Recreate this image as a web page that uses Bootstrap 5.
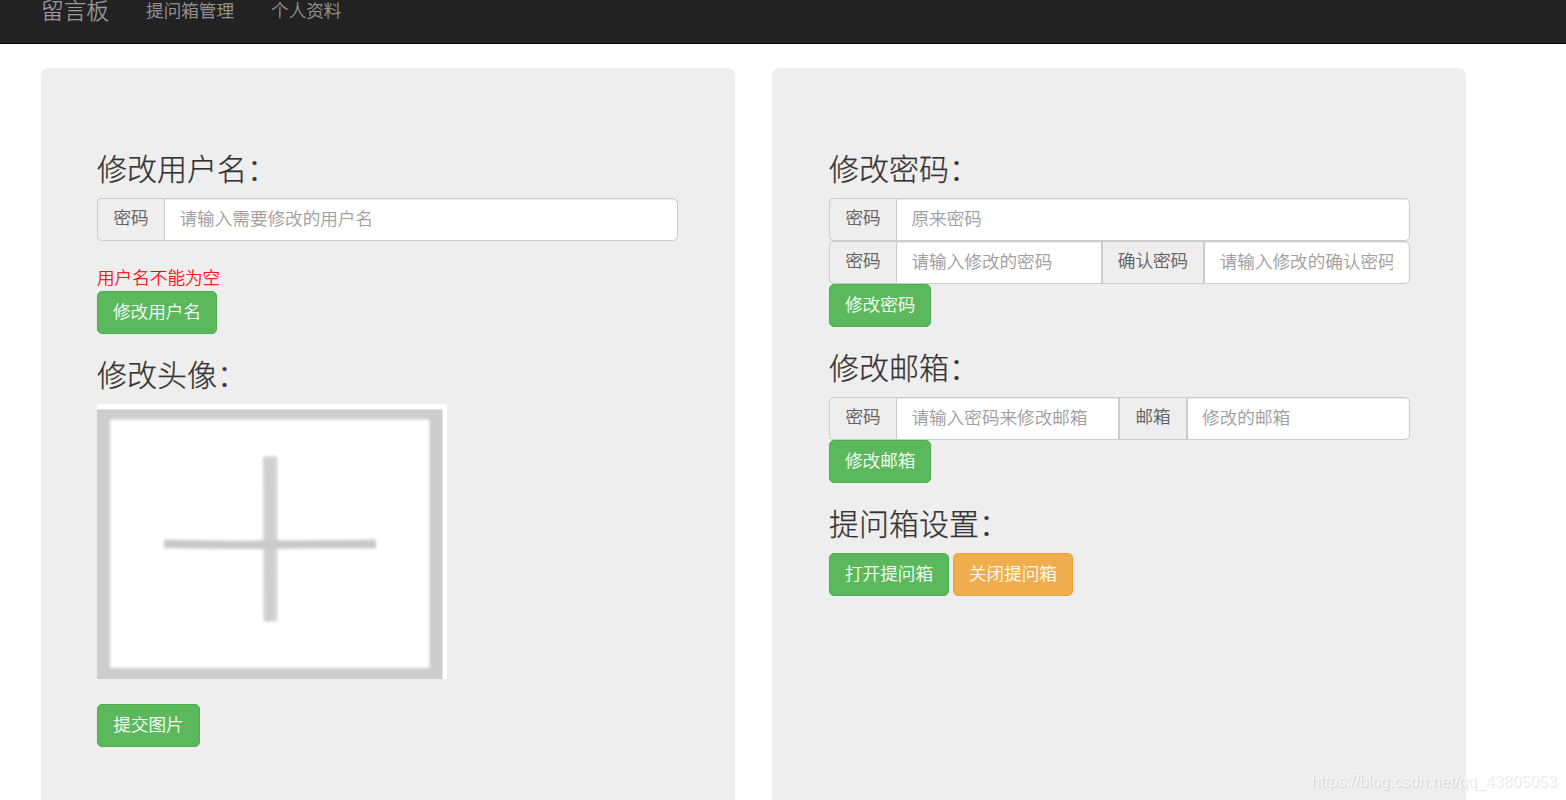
<!DOCTYPE html>
<html lang="zh-CN">
<head>
<meta charset="utf-8">
<meta name="viewport" content="width=device-width, initial-scale=1">
<title>留言板</title>
<link rel="stylesheet" href="https://cdn.jsdelivr.net/npm/bootstrap@5.3.0/dist/css/bootstrap.min.css">
<style>
body{font-family:"Noto Sans CJK SC",sans-serif;font-size:17.6px;font-weight:300;line-height:25px;color:#333;height:800px;overflow:hidden;background:#fff;-webkit-text-stroke:.25px}
.topbar{height:44px;background:#222;border-bottom:1px solid #080808;padding:0 41px;align-items:flex-start;justify-content:flex-start;flex-wrap:nowrap}
.topbar .navbar-brand{font-size:22.7px;line-height:25px;color:#9d9d9d;padding:0;margin:-3px 37px 0 0}
.topbar .nav-link{color:#9d9d9d;padding:0;margin:-3px 37px 0 0;line-height:25px}
.panels{margin:24px 0 0 41px;gap:37px}
.panel-box{width:694px;height:732px;flex:none;background:#eee;border-radius:7.5px 7.5px 0 0;padding:83px 57px 0 56px}
.panel-box+.panel-box{padding:83px 56px 0 57px}
.panel-box h3{font-size:30px;font-weight:300;line-height:33px;margin:0 0 14px;color:#333}
.field-row{height:43px;flex-wrap:nowrap}
.field-row .input-group-text{font-size:17.6px;font-weight:300;line-height:25px;color:#555;background:#eee;border:1px solid #ccc;border-radius:5px;padding:0 15px 6px;margin:0!important}
.field-row .input-group-text:first-child{border-right:0;width:67px;padding-left:15.5px;padding-right:0}
.field-row .form-control{font-size:17.6px;font-weight:300;line-height:25px;height:43px;color:#555;border:1px solid #ccc;border-radius:5px;padding:0 16px 4px 14.5px;margin:0!important;box-shadow:inset 0 1px 1px rgba(0,0,0,.075)}
.field-row .form-control::placeholder{color:#999;opacity:1}
.act{height:43px;font-size:17.6px;font-weight:300;line-height:25px;padding:0 15px 4px;border-radius:5px;color:#fff;display:block}
.act-go{background:#5cb85c;border-color:#4cae4c}
.act-warn{background:#f0ad4e;border-color:#eea236}
.act-upload{width:103px;margin-top:25px}
.error-text{color:#f00;margin-top:23px;height:27px}
.panel-box h3.next-title{margin-top:23px;margin-bottom:15px}
.panel-box h3.tight{margin-bottom:14px}
.avatar{display:block;margin-top:-1px}
.watermark{position:fixed;right:9px;bottom:6px;font:400 16px/24px "Liberation Sans",sans-serif;color:rgba(255,255,255,.6);text-shadow:1px 1px 1px rgba(0,0,0,.12);white-space:nowrap;-webkit-text-stroke:0}
</style>
</head>
<body>
<nav class="navbar topbar">
  <a class="navbar-brand" href="#">留言板</a>
  <a class="nav-link" href="#">提问箱管理</a>
  <a class="nav-link" href="#">个人资料</a>
</nav>
<main class="panels d-flex">
  <section class="panel-box">
    <h3>修改用户名：</h3>
    <div class="input-group field-row">
      <span class="input-group-text">密码</span>
      <input class="form-control" type="text" placeholder="请输入需要修改的用户名">
    </div>
    <div class="error-text">用户名不能为空</div>
    <button class="btn act act-go" type="button">修改用户名</button>
    <h3 class="next-title">修改头像：</h3>
    <svg class="avatar" width="350" height="275" viewBox="0 0 350 275">
      <defs>
        <filter id="soft" x="-10%" y="-10%" width="120%" height="120%" color-interpolation-filters="sRGB"><feGaussianBlur stdDeviation="1.5"/></filter>
        <filter id="softbar" filterUnits="userSpaceOnUse" x="50" y="40" width="250" height="190" color-interpolation-filters="sRGB"><feGaussianBlur stdDeviation="1.7"/></filter>
        <linearGradient id="vbar"><stop offset="0" stop-color="#d3d3d3"/><stop offset=".5" stop-color="#cdcdcd"/><stop offset="1" stop-color="#d8d8d8"/></linearGradient>
      </defs>
      <rect width="350" height="275" fill="#fff"/>
      <rect y="5" width="346" height="270" fill="#e4e4e4"/>
      <rect y="6" width="345" height="269" fill="#cdcdcd"/>
      <rect x="13" y="15.500" width="319.500" height="248.500" fill="#fff" filter="url(#soft)"/>
      <g filter="url(#softbar)">
        <path d="M166 52.500H180.500V217.500H166.500Z" fill="url(#vbar)"/>
        <path d="M67 135.500Q110 137 166 136.500Q225 136.500 279 135.500V144.500Q225 144 166 145Q110 145 67 144Z" fill="#c9c9c9"/>
      </g>
    </svg>
    <button class="btn act act-go act-upload" type="button">提交图片</button>
  </section>
  <section class="panel-box">
    <h3>修改密码：</h3>
    <div class="input-group field-row">
      <span class="input-group-text">密码</span>
      <input class="form-control" type="text" placeholder="原来密码">
    </div>
    <div class="input-group field-row">
      <span class="input-group-text">密码</span>
      <input class="form-control" type="text" placeholder="请输入修改的密码">
      <span class="input-group-text rounded-0">确认密码</span>
      <input class="form-control" type="text" placeholder="请输入修改的确认密码">
    </div>
    <button class="btn act act-go" type="button">修改密码</button>
    <h3 class="next-title tight">修改邮箱：</h3>
    <div class="input-group field-row">
      <span class="input-group-text">密码</span>
      <input class="form-control" type="text" placeholder="请输入密码来修改邮箱">
      <span class="input-group-text rounded-0">邮箱</span>
      <input class="form-control" type="text" placeholder="修改的邮箱">
    </div>
    <button class="btn act act-go" type="button">修改邮箱</button>
    <h3 class="next-title tight">提问箱设置：</h3>
    <div class="d-flex gap-1">
      <button class="btn act act-go" type="button">打开提问箱</button>
      <button class="btn act act-warn" type="button">关闭提问箱</button>
    </div>
  </section>
</main>
<div class="watermark">https://blog.csdn.net/qq_43805053</div>
<script src="https://cdn.jsdelivr.net/npm/bootstrap@5.3.0/dist/js/bootstrap.bundle.min.js"></script>
</body>
</html>
